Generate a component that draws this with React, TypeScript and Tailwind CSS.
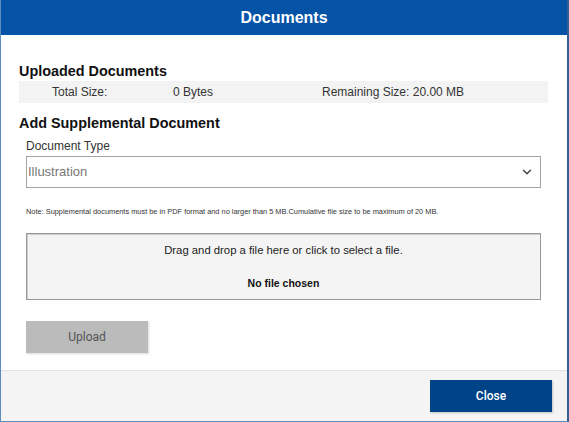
import { ChevronDown } from "lucide-react"

const App = () => {
  return (
    <div className="w-[569px] h-[422px] bg-white flex flex-col border-l border-b border-[#5b8cc0] border-r-2 border-r-[#2f5f94] font-['Liberation_Sans',Arial,sans-serif] text-[#222]">
      <div className="h-[35px] bg-[#0453a6] flex items-center justify-center shrink-0">
        <h1 className="text-white font-bold text-[16px]">Documents</h1>
      </div>

      <div className="flex-1 px-[18px] pt-[28px]">
        <h2 className="font-bold text-[14.4px] leading-[17px] text-[#111]">Uploaded Documents</h2>
        <div className="mt-[1px] mr-[1px] h-[22px] bg-[#f3f3f3] flex items-center text-[12px] text-[#333]">
          <span className="ml-[33px] w-[121px]">Total Size:</span>
          <span className="w-[149px]">0 Bytes</span>
          <span>Remaining Size: 20.00 MB</span>
        </div>

        <h2 className="mt-[12px] font-bold text-[14.4px] leading-[17px] text-[#111]">Add Supplemental Document</h2>

        <div className="pl-[7px] pr-[8px]">
          <label className="block mt-[7px] text-[12px] leading-[14px] text-[#333]">Document Type</label>
          <div className="mt-[3px] h-[32px] border border-[#a3a3a3] flex items-center justify-between pl-[1px] pr-[6px]">
            <span className="text-[13px] text-[#777]">Illustration</span>
            <ChevronDown className="w-[14px] h-[14px] text-[#444]" strokeWidth={2.5} />
          </div>

          <p className="mt-[19px] text-[7.4px] leading-[10px] text-[#333]">
            Note: Supplemental documents must be in PDF format and no larger than 5 MB.Cumulative file size to be maximum of 20 MB.
          </p>

          <div className="mt-[16px] h-[67px] bg-[#f4f4f4] border border-[#999] shadow-[inset_1px_1px_0_#ccc] flex flex-col items-center justify-center">
            <span className="text-[11.3px] text-[#222] leading-[14px]">Drag and drop a file here or click to select a file.</span>
            <span className="mt-[20px] text-[10.5px] font-bold text-[#111] leading-[13px]">No file chosen</span>
          </div>

          <button className="mt-[21px] w-[122px] h-[32px] bg-[#bbbbbb] text-[#555] text-[12px] font-['Roboto',sans-serif] shadow-[1px_1px_2px_rgba(0,0,0,0.15)]">
            Upload
          </button>
        </div>
      </div>

      <div className="h-[51px] shrink-0 bg-[#f4f4f4] border-t border-[#e2e2e2] flex items-center justify-end pr-[15px]">
        <button className="w-[122px] h-[32px] bg-[#004387] text-white text-[12px] font-medium font-['Roboto',sans-serif] shadow-[1px_1px_2px_rgba(0,0,0,0.2)]">
          Close
        </button>
      </div>
    </div>
  )
}

export default App
